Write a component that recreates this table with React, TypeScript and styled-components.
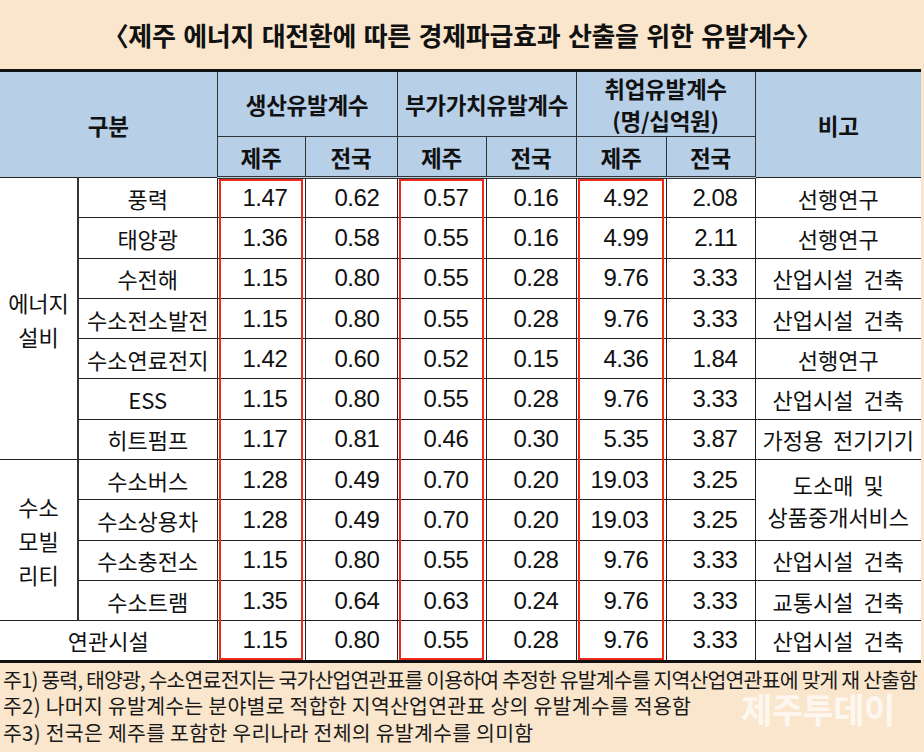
import React from 'react';
import styled, { createGlobalStyle, css } from 'styled-components';

const GlobalStyle = createGlobalStyle`
  html, body {
    margin: 0;
    padding: 0;
    background: #f9e6cd;
  }
  body {
    font-family: "Noto Sans CJK KR", "Noto Sans", sans-serif;
    color: #111;
  }
`;

const Page = styled.div`
  width: 924px;
  height: 752px;
  position: relative;
  overflow: hidden;
  background: #f9e6cd;
`;

const TitleBar = styled.div`
  height: 69px;
  display: flex;
  align-items: center;
  justify-content: center;
`;

const Title = styled.h1`
  margin: 0;
  font-size: 26px;
  font-weight: 700;
  letter-spacing: -0.3px;
  word-spacing: 2px;
  color: #111;
`;

const Table = styled.table`
  width: 921px;
  table-layout: fixed;
  border-collapse: collapse;
  border-top: 3px solid #111;
  border-bottom: 3px solid #111;
  background: #fff;
`;

const HeadCell = styled.th<{ $sub?: boolean; $first?: boolean }>`
  background: #b7cfe7;
  font-weight: 700;
  font-size: 22.5px;
  line-height: 32px;
  letter-spacing: -0.3px;
  padding: 0;
  border-left: ${p => (p.$first ? 'none' : '1px solid #333')};
  border-top: 1px solid #333;
  height: ${p => (p.$sub ? '39px' : '63px')};
  white-space: nowrap;
`;

const HeadRow = styled.tr`
  &:last-child th {
    border-bottom: 3px double #333;
  }
`;

const Row = styled.tr`
  height: 40.3px;
`;

const Cell = styled.td`
  padding: 0;
  border: 1px solid #222;
  font-size: 22px;
  line-height: 32px;
  text-align: center;
  white-space: pre;
  position: relative;
`;

const GroupCell = styled(Cell)`
  border-left: none;
  border-right: 2px solid #333;
  line-height: 34px;
  white-space: normal;
`;

const NameCell = styled(Cell)<{ $span?: boolean }>`
  border-left: ${p => (p.$span ? 'none' : '2px solid #333')};
`;

const NumCell = styled(Cell)<{ $mark?: boolean; $first?: boolean; $last?: boolean }>`
  font-family: "Liberation Sans", Arial, sans-serif;
  font-size: 24px;
  letter-spacing: -0.4px;
  text-align: right;
  padding-right: 17px;
  ${p =>
    p.$mark &&
    css`
      &::after {
        content: '';
        position: absolute;
        left: 1px;
        right: 2px;
        top: ${p.$first ? '0' : '-1px'};
        bottom: ${p.$last ? '0' : '-1px'};
        border-left: 2.5px solid #ec2b1c;
        border-right: 2.5px solid #ec2b1c;
        ${p.$first && 'border-top: 2.5px solid #ec2b1c;'}
        ${p.$last && 'border-bottom: 2.5px solid #ec2b1c;'}
        pointer-events: none;
      }
    `}
`;

const NoteCell = styled(Cell)`
  border-right: none;
`;

const Footnotes = styled.div`
  padding: 3px 0 0 3px;
`;

const Note = styled.p<{ $tight?: boolean }>`
  margin: 0;
  font-size: 20.5px;
  line-height: 26.5px;
  color: #1a1a1a;
  letter-spacing: ${p => (p.$tight ? '-0.85px' : '0.25px')};
  white-space: nowrap;
`;

const Watermark = styled.div`
  position: absolute;
  left: 741px;
  top: 684px;
  font-size: 34px;
  font-weight: 700;
  color: rgba(255, 255, 255, 0.72);
  letter-spacing: -0.5px;
  pointer-events: none;
`;

type DataRow = {
  name: string;
  values: string[];
  note?: string;
  noteSpan?: number;
};

const energy: DataRow[] = [
  { name: '풍력', values: ['1.47', '0.62', '0.57', '0.16', '4.92', '2.08'], note: '선행연구' },
  { name: '태양광', values: ['1.36', '0.58', '0.55', '0.16', '4.99', '2.11'], note: '선행연구' },
  { name: '수전해', values: ['1.15', '0.80', '0.55', '0.28', '9.76', '3.33'], note: '산업시설  건축' },
  { name: '수소전소발전', values: ['1.15', '0.80', '0.55', '0.28', '9.76', '3.33'], note: '산업시설  건축' },
  { name: '수소연료전지', values: ['1.42', '0.60', '0.52', '0.15', '4.36', '1.84'], note: '선행연구' },
  { name: 'ESS', values: ['1.15', '0.80', '0.55', '0.28', '9.76', '3.33'], note: '산업시설  건축' },
  { name: '히트펌프', values: ['1.17', '0.81', '0.46', '0.30', '5.35', '3.87'], note: '가정용  전기기기' },
];

const mobility: DataRow[] = [
  { name: '수소버스', values: ['1.28', '0.49', '0.70', '0.20', '19.03', '3.25'], note: '도소매  및\n상품중개서비스', noteSpan: 2 },
  { name: '수소상용차', values: ['1.28', '0.49', '0.70', '0.20', '19.03', '3.25'] },
  { name: '수소충전소', values: ['1.15', '0.80', '0.55', '0.28', '9.76', '3.33'], note: '산업시설  건축' },
  { name: '수소트램', values: ['1.35', '0.64', '0.63', '0.24', '9.76', '3.33'], note: '교통시설  건축' },
];

const related: DataRow = {
  name: '연관시설',
  values: ['1.15', '0.80', '0.55', '0.28', '9.76', '3.33'],
  note: '산업시설  건축',
};

const Values = ({ values, first, last }: { values: string[]; first?: boolean; last?: boolean }) => (
  <>
    {values.map((v, i) => (
      <NumCell key={i} $mark={i % 2 === 0} $first={first} $last={last}>
        {v}
      </NumCell>
    ))}
  </>
);

const widths = [78, 139, 88, 92, 89, 90, 90, 89, 166];

const App = () => {
  return (
    <Page>
      <GlobalStyle />
      <TitleBar>
        <Title>〈제주 에너지 대전환에 따른 경제파급효과 산출을 위한 유발계수〉</Title>
      </TitleBar>
      <Table>
        <colgroup>
          {widths.map((w, i) => (
            <col key={i} style={{ width: w }} />
          ))}
        </colgroup>
        <thead>
          <HeadRow>
            <HeadCell colSpan={2} rowSpan={2} $first>
              구분
            </HeadCell>
            <HeadCell colSpan={2}>생산유발계수</HeadCell>
            <HeadCell colSpan={2}>부가가치유발계수</HeadCell>
            <HeadCell colSpan={2}>
              취업유발계수
              <br />
              (명/십억원)
            </HeadCell>
            <HeadCell rowSpan={2}>비고</HeadCell>
          </HeadRow>
          <HeadRow>
            <HeadCell $sub>제주</HeadCell>
            <HeadCell $sub>전국</HeadCell>
            <HeadCell $sub>제주</HeadCell>
            <HeadCell $sub>전국</HeadCell>
            <HeadCell $sub>제주</HeadCell>
            <HeadCell $sub>전국</HeadCell>
          </HeadRow>
        </thead>
        <tbody>
          {energy.map((r, i) => (
            <Row key={r.name}>
              {i === 0 && (
                <GroupCell rowSpan={energy.length}>
                  에너지
                  <br />
                  설비
                </GroupCell>
              )}
              <NameCell>{r.name}</NameCell>
              <Values values={r.values} first={i === 0} />
              <NoteCell>{r.note}</NoteCell>
            </Row>
          ))}
          {mobility.map((r, i) => (
            <Row key={r.name}>
              {i === 0 && (
                <GroupCell rowSpan={mobility.length}>
                  수소
                  <br />
                  모빌
                  <br />
                  리티
                </GroupCell>
              )}
              <NameCell>{r.name}</NameCell>
              <Values values={r.values} />
              {r.note && <NoteCell rowSpan={r.noteSpan ?? 1}>{r.note}</NoteCell>}
            </Row>
          ))}
          <Row>
            <NameCell colSpan={2} $span>
              {related.name}
            </NameCell>
            <Values values={related.values} last />
            <NoteCell>{related.note}</NoteCell>
          </Row>
        </tbody>
      </Table>
      <Footnotes>
        <Note $tight>주1) 풍력, 태양광, 수소연료전지는 국가산업연관표를 이용하여 추정한 유발계수를 지역산업연관표에 맞게 재 산출함</Note>
        <Note>주2) 나머지 유발계수는 분야별로 적합한 지역산업연관표 상의 유발계수를 적용함</Note>
        <Note>주3) 전국은 제주를 포함한 우리나라 전체의 유발계수를 의미함</Note>
      </Footnotes>
      <Watermark>제주투데이</Watermark>
    </Page>
  );
};

export default App;
